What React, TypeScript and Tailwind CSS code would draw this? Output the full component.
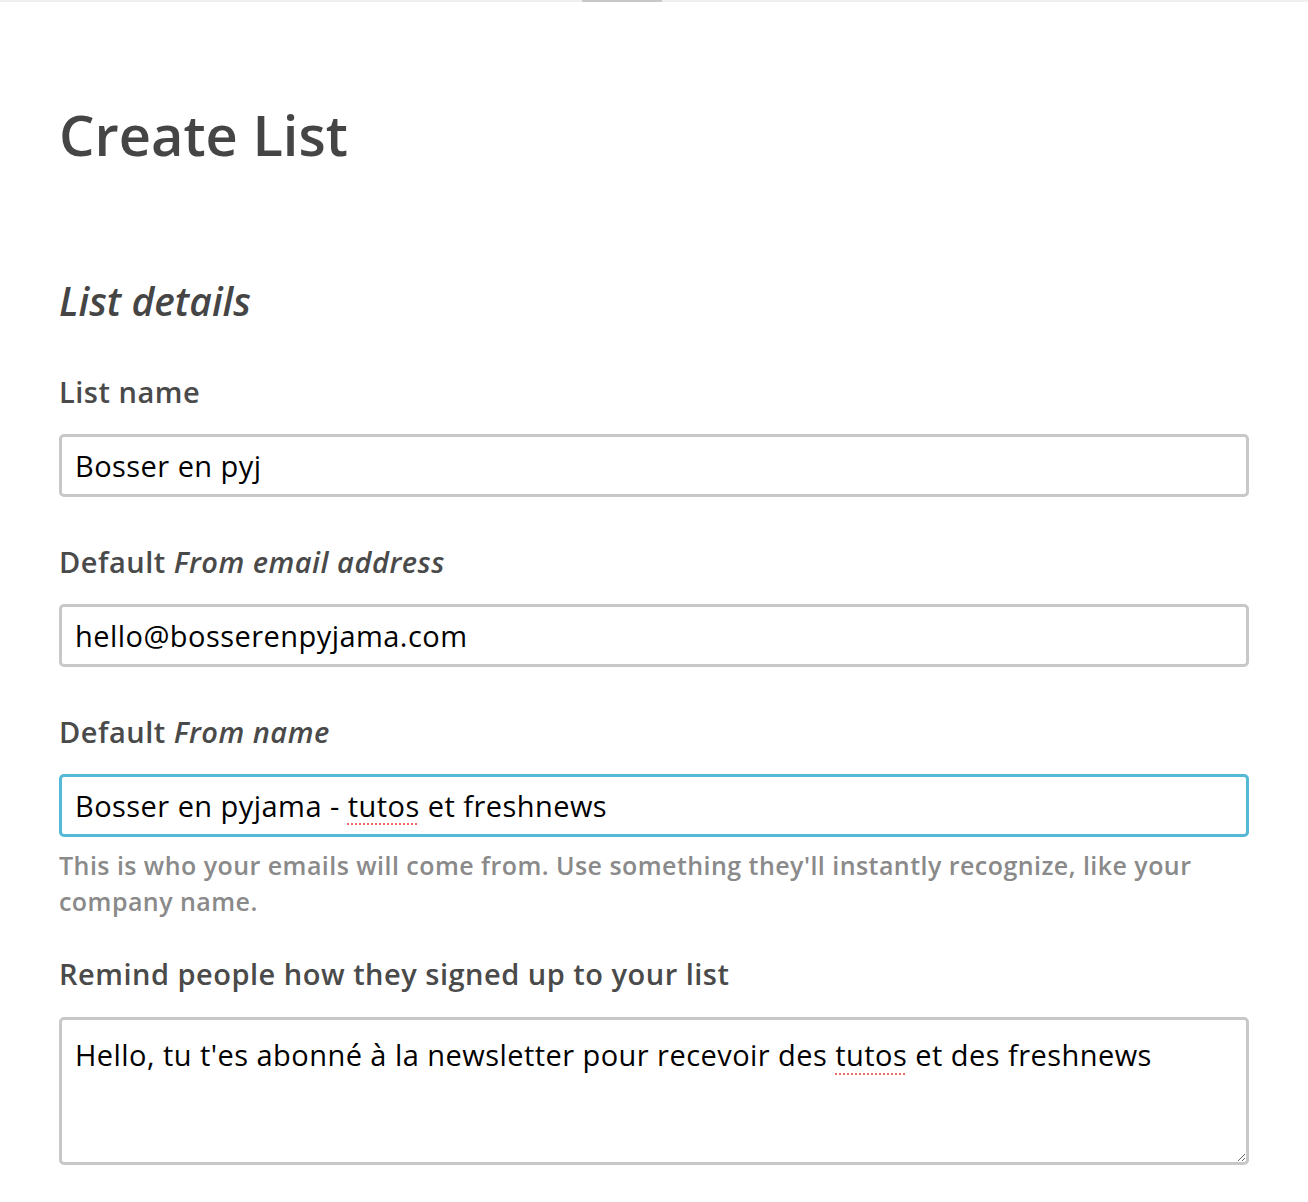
import { useState } from 'react'

const police = { fontFamily: '"Open Sans", "Noto Sans", sans-serif' }

function Etiquette({ children }: { children: React.ReactNode }) {
  return (
    <label className="block text-[29px] leading-[40px] font-semibold tracking-[0.5px] text-[#4a4a4a]">
      {children}
    </label>
  )
}

export default function App() {
  const [nom, setNom] = useState('Bosser en pyj')
  const [email, setEmail] = useState('hello@bosserenpyjama.com')
  const [expediteur, setExpediteur] = useState('Bosser en pyjama - tutos et freshnews')
  const [rappel, setRappel] = useState(
    "Hello, tu t'es abonné à la newsletter pour recevoir des tutos et des freshnews"
  )

  const champ =
    'block h-[63px] w-full rounded-[5px] border-[3px] bg-white px-[13px] text-[29px] leading-[40px] tracking-[0.45px] text-black outline-none'
  const souligne =
    'underline decoration-[#ec6b67] decoration-dotted decoration-2 underline-offset-[7px]'

  return (
    <div className="min-h-screen bg-white" style={police}>
      <div className="h-[2px] bg-[#efefef]">
        <div className="ml-[582px] h-[2px] w-[80px] bg-[#c8c8c8]" />
      </div>

      <div className="px-[59px]">
        <h1 className="mt-[99px] text-[56px] leading-[67px] font-semibold text-[#454545]">Create List</h1>

        <h2 className="mt-[109px] text-[39px] leading-[48px] font-semibold italic text-[#454545]">List details</h2>

        <div className="mt-[47px]">
          <Etiquette>List name</Etiquette>
          <input
            className={`${champ} mt-[22px] border-[#c8c8c8]`}
            value={nom}
            onChange={(e) => setNom(e.target.value)}
          />
        </div>

        <div className="mt-[45px]">
          <Etiquette>
            Default <em>From email address</em>
          </Etiquette>
          <input
            className={`${champ} mt-[22px] border-[#c8c8c8]`}
            value={email}
            onChange={(e) => setEmail(e.target.value)}
          />
        </div>

        <div className="mt-[45px]">
          <Etiquette>
            Default <em>From name</em>
          </Etiquette>
          <div className="relative mt-[22px]">
            <input
              className={`${champ} border-[#55b8d5]`}
              value={expediteur}
              onChange={(e) => setExpediteur(e.target.value)}
            />
            {/* faux soulignement du correcteur */}
            <div className="pointer-events-none absolute inset-0 flex items-center border-[3px] border-transparent px-[13px] text-[29px] leading-[40px] tracking-[0.45px] whitespace-pre text-transparent">
              <span>
                Bosser en pyjama - <span className={souligne}>tutos</span>
              </span>
            </div>
          </div>
          <p className="mt-[10px] text-[25px] leading-[36px] font-semibold tracking-[0.45px] text-[#8a8a8a]">
            This is who your emails will come from. Use something they'll instantly recognize, like your company name.
          </p>
        </div>

        <div className="mt-[35px]">
          <Etiquette>Remind people how they signed up to your list</Etiquette>
          <div className="relative mt-[23px]">
            <textarea
              className="block h-[148px] w-full rounded-[5px] border-[3px] border-[#c8c8c8] bg-white px-[13px] pt-[15px] text-[29px] leading-[40px] tracking-[0.45px] text-black outline-none"
              value={rappel}
              onChange={(e) => setRappel(e.target.value)}
            />
            <div className="pointer-events-none absolute inset-0 border-[3px] border-transparent px-[13px] pt-[15px] text-[29px] leading-[40px] tracking-[0.45px] whitespace-pre text-transparent">
              Hello, tu t'es abonné à la newsletter pour recevoir des <span className={souligne}>tutos</span>
            </div>
          </div>
        </div>
      </div>
    </div>
  )
}
